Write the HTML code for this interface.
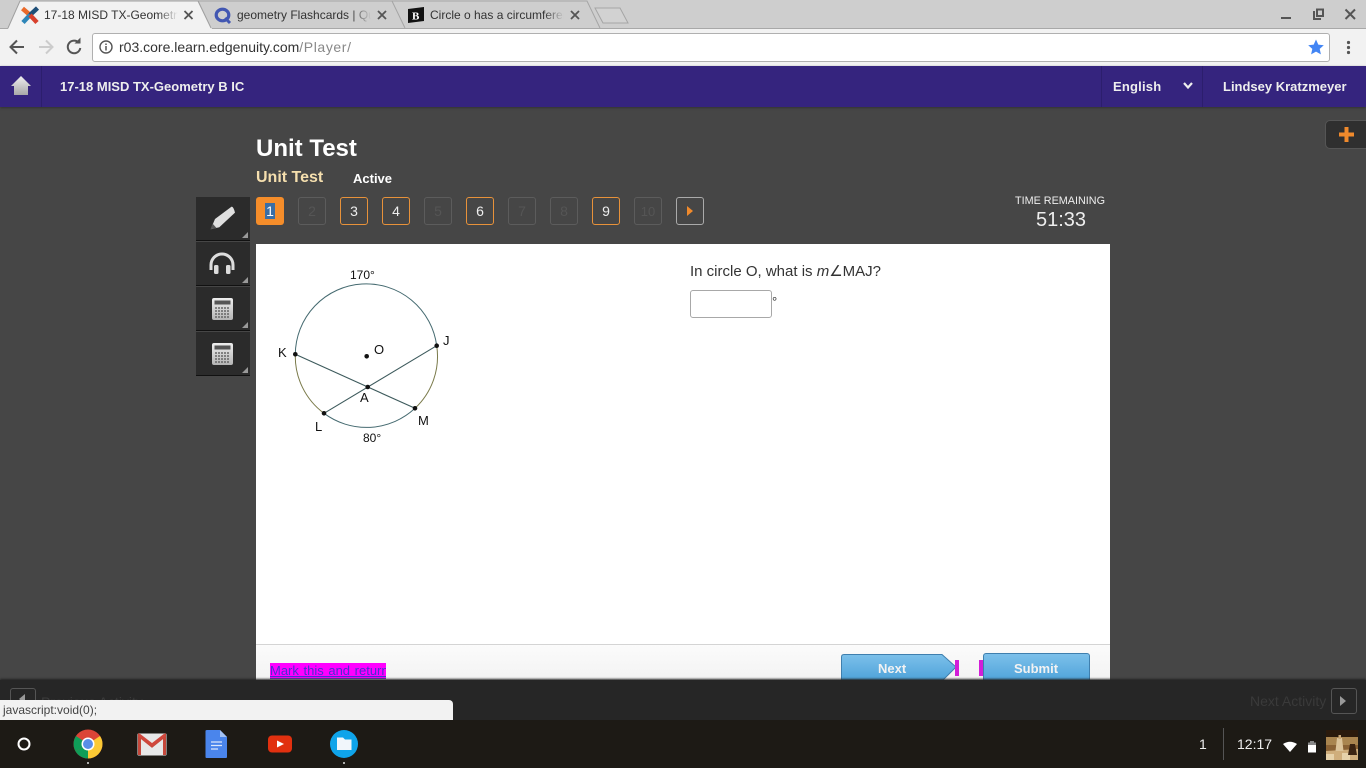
<!DOCTYPE html>
<html><head><meta charset="utf-8"><style>
html,body{margin:0;padding:0;width:1366px;height:768px;overflow:hidden;background:#464646;font-family:"Liberation Sans",sans-serif}
.a{position:absolute;white-space:nowrap}
.n{position:absolute;top:197px;width:26px;height:26px;border:1px solid #5c5c5c;border-radius:3px;text-align:center;line-height:27px;font-size:14px;color:#555}
.n.o{border-color:#e8923a;color:#eee}
.t{position:absolute;left:196px;width:54px;height:43px;background:#2b2b2b;border-bottom:1px solid #111}
.t:after{content:"";position:absolute;right:2px;bottom:2px;border-left:6px solid transparent;border-bottom:6px solid #999}
.tab{font-size:12px;color:#333;top:8px;overflow:hidden}
</style></head><body>
<div class="a" style="left:0;top:0;width:1366px;height:28px;background:#cecece"></div>
<div class="a" style="left:0;top:28px;width:1366px;height:1px;background:#a8a8a8"></div>
<div class="a" style="left:0;top:29px;width:1366px;height:37px;background:#f2f2f2"></div>
<svg class="a" style="left:0;top:0" width="640" height="30">
<path d="M404 28L391 1H587L600 28" fill="#cecece" stroke="#a5a5a5"/>
<path d="M211 28L198 1H392L405 28" fill="#cecece" stroke="#a5a5a5"/>
<path d="M8 29L20 1H198L212 29Z" fill="#f2f2f2"/><path d="M8 28L20 1H198L211 28" fill="none" stroke="#a0a0a0"/>
<path d="M595 8H620L628 23H603Z" fill="#d2d2d2" stroke="#a5a5a5"/>
<path d="M22.500 8.500L30 15" stroke="#ea6a2a" stroke-width="4.500"/><path d="M37.500 8L30 15" stroke="#1f4f78" stroke-width="4.500"/><path d="M30 15L23 22.500" stroke="#2e86b8" stroke-width="4.500"/><path d="M30 15L37 22.500" stroke="#d8402c" stroke-width="4.500"/>
<ellipse cx="222.500" cy="15" rx="6.300" ry="5.800" fill="none" stroke="#4257b2" stroke-width="3.200"/><path d="M225 18L230 23" stroke="#4257b2" stroke-width="3"/>
<path d="M408 9L424 7V21L408 23Z" fill="#111"/><text x="412" y="19.500" font-size="11" font-weight="bold" font-family="Liberation Serif" fill="#fff">B</text>
<g stroke="#555" stroke-width="1.800"><path d="M184.500 11L192.500 19M192.500 11L184.500 19M378 11L386 19M386 11L378 19M571 11L579 19M579 11L571 19"/></g>
</svg>
<div class="a tab" style="left:44px;width:134px;-webkit-mask-image:linear-gradient(90deg,#000 85%,transparent)">17-18 MISD TX-Geometry B IC</div>
<div class="a tab" style="left:237px;width:134px;-webkit-mask-image:linear-gradient(90deg,#000 85%,transparent)">geometry Flashcards | Quizlet</div>
<div class="a tab" style="left:430px;width:134px;-webkit-mask-image:linear-gradient(90deg,#000 85%,transparent)">Circle o has a circumference of</div>
<svg class="a" style="left:1270px;top:5px" width="96" height="20"><path d="M11 13H21" stroke="#555" stroke-width="2"/><path d="M44 6V14H51M47 4.500H53V11H47Z" fill="none" stroke="#555" stroke-width="2"/><path d="M75.500 4.500L85 14M85 4.500L75.500 14" stroke="#555" stroke-width="2"/></svg>
<svg class="a" style="left:0;top:30px" width="100" height="34"><path d="M24 17H11M17 10.500L10.500 17L17 23.500" fill="none" stroke="#555" stroke-width="2"/><path d="M52 17H39M46 10.500L52.500 17L46 23.500" fill="none" stroke="#ccc" stroke-width="2"/><path d="M79 13A6.300 6.300 0 1 0 80.300 18" fill="none" stroke="#555" stroke-width="2"/><path d="M74.500 13.500H80.500V7.500Z" fill="#555"/></svg>
<div class="a" style="left:92px;top:33px;width:1236px;height:27px;background:#fff;border:1px solid #b0b0b0;border-radius:3px"></div>
<svg class="a" style="left:98px;top:39px" width="16" height="16"><circle cx="8" cy="8" r="6" fill="none" stroke="#555" stroke-width="1.400"/><path d="M8 7V11.500M8 4.500V6" stroke="#555" stroke-width="1.500"/></svg>
<div class="a" style="left:119px;top:39px;font-size:14px;color:#333">r03.core.learn.edgenuity.com<span style="color:#888;letter-spacing:.6px">/Player/</span></div>
<svg class="a" style="left:1307px;top:38px" width="18" height="18"><path d="M9 1.500L11.300 6.600L16.800 7.200L12.700 10.900L13.900 16.400L9 13.600L4.100 16.400L5.300 10.900L1.200 7.200L6.700 6.600Z" fill="#4285f4"/></svg>
<svg class="a" style="left:1345px;top:40px" width="8" height="16"><circle cx="3.500" cy="2.500" r="1.600" fill="#555"/><circle cx="3.500" cy="7.500" r="1.600" fill="#555"/><circle cx="3.500" cy="12.500" r="1.600" fill="#555"/></svg>

<div class="a" style="left:0;top:66px;width:1366px;height:41px;background:#35247e;box-shadow:0 1px 2px #333"></div>
<div class="a" style="left:41px;top:66px;width:1px;height:41px;background:#2c1e6d"></div>
<div class="a" style="left:1101px;top:66px;width:1px;height:41px;background:#2c1e6d"></div>
<div class="a" style="left:1202px;top:66px;width:1px;height:41px;background:#2c1e6d"></div>
<svg class="a" style="left:10px;top:76px" width="22" height="20"><defs><linearGradient id="h" x1="0" y1="0" x2="0" y2="1"><stop offset="0" stop-color="#f0f0f0"/><stop offset="1" stop-color="#a8a8a8"/></linearGradient></defs><path d="M11 0L21 10H18V19H4V10H1Z" fill="url(#h)"/></svg>
<div class="a" style="left:60px;top:79px;font-size:13px;line-height:15px;font-weight:bold;color:#eee">17-18 MISD TX-Geometry B IC</div>
<div class="a" style="left:1113px;top:79px;font-size:13px;line-height:15px;font-weight:bold;color:#eee;letter-spacing:.2px">English</div>
<svg class="a" style="left:1182px;top:81px" width="12" height="10"><path d="M2 2L6 6.500L10 2" fill="none" stroke="#eee" stroke-width="2.200"/></svg>
<div class="a" style="left:1223px;top:79px;font-size:13px;line-height:15px;font-weight:bold;color:#eee">Lindsey Kratzmeyer</div>

<div class="a" style="left:1325px;top:120px;width:45px;height:27px;background:#2f2f2f;border:1px solid #555;border-radius:5px"></div>
<svg class="a" style="left:1339px;top:127px" width="15" height="15"><path d="M7.500 0V15M0 7.500H15" stroke="#f08a2c" stroke-width="4"/></svg>

<div class="a" style="left:256px;top:135px;font-size:24px;font-weight:bold;color:#fff">Unit Test</div>
<div class="a" style="left:256px;top:169px;font-size:16px;font-weight:bold;color:#f5dfae">Unit Test</div>
<div class="a" style="left:353px;top:171px;font-size:13px;font-weight:bold;color:#fff">Active</div>

<div class="n" style="left:256px;width:28px;height:28px;border:0;background:#f58d2a;color:#fff;line-height:28px"><span style="background:#3a6ea5;color:#fff;padding:0 1px">1</span></div>
<div class="n" style="left:298px">2</div>
<div class="n o" style="left:340px">3</div>
<div class="n o" style="left:382px">4</div>
<div class="n" style="left:424px">5</div>
<div class="n o" style="left:466px">6</div>
<div class="n" style="left:508px">7</div>
<div class="n" style="left:550px">8</div>
<div class="n o" style="left:592px">9</div>
<div class="n" style="left:634px;font-size:13px">10</div>
<div class="n" style="left:676px;border-color:#aaa"></div>
<svg class="a" style="left:686px;top:205px" width="8" height="12"><path d="M1 1L7 6L1 11Z" fill="#f08a2c"/></svg>

<div class="t" style="top:197px"></div>
<div class="t" style="top:242px"></div>
<div class="t" style="top:287px"></div>
<div class="t" style="top:332px"></div>
<svg class="a" style="left:196px;top:197px" width="54" height="180">
<defs><linearGradient id="k" x1="0" y1="0" x2="0" y2="1"><stop offset="0" stop-color="#eee"/><stop offset="1" stop-color="#b4b4b4"/></linearGradient></defs>
<path d="M19 22L35.600 9.600Q37.500 9.500 39 15.600L23.300 30.300L14.700 32.300Z" fill="#e0e0e0"/><path d="M14.700 32.300L16.500 26.500L20.500 31Z" fill="#555"/>
<path d="M15 73V68A11 11 0 0 1 37 68V73" fill="none" stroke="#ddd" stroke-width="3"/><rect x="18" y="68" width="4.500" height="9" rx="1.500" fill="#ddd"/><rect x="30" y="68" width="4.500" height="9" rx="1.500" fill="#ddd"/>
<rect x="16" y="101" width="21" height="22" rx="2" fill="url(#k)"/><rect x="18.500" y="103.500" width="16" height="4" fill="#555"/><path d="M19 111H34M19 114H34M19 117H34M19 120H34" stroke="#666" stroke-width="1.500" stroke-dasharray="2 1"/>
<g transform="translate(0 45)"><rect x="16" y="101" width="21" height="22" rx="2" fill="url(#k)"/><rect x="18.500" y="103.500" width="16" height="4" fill="#555"/><path d="M19 111H34M19 114H34M19 117H34M19 120H34" stroke="#666" stroke-width="1.500" stroke-dasharray="2 1"/></g>
</svg>

<div class="a" style="left:1015px;top:195px;font-size:10.800px;line-height:13px;color:#eee">TIME REMAINING</div>
<div class="a" style="left:1036px;top:209px;font-size:20px;color:#eee">51:33</div>

<div class="a" style="left:256px;top:244px;width:854px;height:436px;background:#fff"></div>
<div class="a" style="left:256px;top:644px;width:854px;height:36px;background:linear-gradient(#fbfbfb,#f3f3f3);border-top:1px solid #d4d4d4;box-sizing:border-box"></div>

<svg class="a" style="left:270px;top:260px" width="200" height="190">
<path d="M25.300 94.300A71 71 0 0 1 166.700 85.700" fill="none" stroke="#456a70" stroke-width="1"/>
<path d="M166.700 85.700A71 71 0 0 1 145 148.300M54 153.300A71 71 0 0 1 25.300 94.300" fill="none" stroke="#7a7a4a" stroke-width="1"/>
<path d="M54 153.300A71 71 0 0 0 145 148.300" fill="none" stroke="#456a70" stroke-width="1"/>
<path d="M25.300 94.300L145 148.300M54 153.300L166.700 85.700" stroke="#3d5a5c" stroke-width="1.100"/>
<g fill="#111"><circle cx="25.300" cy="94.300" r="2.300"/><circle cx="166.700" cy="85.700" r="2.300"/><circle cx="96.700" cy="96.300" r="2.300"/><circle cx="97.700" cy="127" r="2.300"/><circle cx="54" cy="153.300" r="2.300"/><circle cx="145" cy="148.300" r="2.300"/></g>
<g font-size="12" fill="#111" font-family="Liberation Sans">
<text x="80" y="19">170°</text><text x="93" y="182">80°</text></g>
<g font-size="13" fill="#111" font-family="Liberation Sans">
<text x="8" y="97">K</text><text x="173" y="85">J</text><text x="104" y="94">O</text><text x="90" y="142">A</text><text x="45" y="171">L</text><text x="148" y="165">M</text></g>
</svg>

<div class="a" style="left:690px;top:262px;font-size:15px;color:#333">In circle O, what is <i>m</i>∠MAJ?</div>
<div class="a" style="left:690px;top:290px;width:80px;height:26px;background:#fff;border:1px solid #a8a8a8;border-radius:3px"></div>
<div class="a" style="left:772px;top:294px;font-size:13px;color:#333">°</div>

<div class="a" style="left:270px;top:663px;width:116px;height:15px;background:#f0f;border-bottom:1px solid #7a2ad0;color:#4a2fd0;font-size:13px;line-height:16px;text-decoration:underline;word-spacing:1px;overflow:hidden">Mark this and return</div>
<svg class="a" style="left:841px;top:654px" width="115" height="26"><path d="M.500 26V3Q.500 .500 3 .500H101L115 13L102 26Z" fill="url(#g)" stroke="#3f7fae"/><defs><linearGradient id="g" x1="0" y1="0" x2="0" y2="1"><stop offset="0" stop-color="#7cc0ea"/><stop offset="1" stop-color="#4fa3da"/></linearGradient></defs></svg>
<div class="a" style="left:878px;top:661px;font-size:13px;font-weight:bold;color:#f2f2f2">Next</div>
<div class="a" style="left:955px;top:660px;width:4px;height:16px;background:#d21fd8"></div>
<div class="a" style="left:979px;top:660px;width:4px;height:16px;background:#d21fd8"></div>
<div class="a" style="left:983px;top:653px;width:105px;height:27px;background:linear-gradient(#7cc0ea,#4fa3da);border:1px solid #3f7fae;border-bottom:0;border-radius:3px 3px 0 0"></div>
<div class="a" style="left:1014px;top:661px;font-size:13px;font-weight:bold;color:#f2f2f2">Submit</div>

<div class="a" style="left:0;top:680px;width:1366px;height:40px;background:#262626;box-shadow:0 -1px 2px #222"></div>
<div class="a" style="left:10px;top:688px;width:24px;height:24px;border:1px solid #555;border-radius:3px"></div>
<svg class="a" style="left:18px;top:694px" width="8" height="8"><path d="M7 0L1 5L7 10Z" fill="#999"/></svg>
<div class="a" style="left:41px;top:694px;font-size:14px;color:#3c3c3c">Previous Activity</div>
<div class="a" style="left:1250px;top:693px;font-size:14px;color:#3a3a3a">Next Activity</div>
<div class="a" style="left:1331px;top:688px;width:24px;height:24px;border:1px solid #555;border-radius:3px"></div>
<svg class="a" style="left:1339px;top:695px" width="8" height="12"><path d="M1 1L7 6L1 11Z" fill="#999"/></svg>
<div class="a" style="left:0;top:700px;width:453px;height:20px;background:#f2f2f2;border-radius:0 4px 0 0"></div>
<div class="a" style="left:3px;top:703px;font-size:12px;color:#444">javascript:void(0);</div>

<div class="a" style="left:0;top:720px;width:1366px;height:48px;background:#1d1a15"></div>
<svg class="a" style="left:0;top:720px" width="370" height="48">
<circle cx="24" cy="24" r="5.500" fill="none" stroke="#fff" stroke-width="2"/>
<circle cx="88" cy="24" r="14.500" fill="#db4437"/>
<path d="M88 24L75.500 31.200A14.500 14.500 0 0 0 88 38.500Z" fill="#0f9d58"/><path d="M75.500 31.200A14.500 14.500 0 0 1 76 16L88 24Z" fill="#0f9d58"/>
<path d="M88 24V38.500A14.500 14.500 0 0 0 102.500 24A14 14 0 0 0 100 16Z" fill="#fcc934"/>
<circle cx="88" cy="24" r="6.500" fill="#fff"/><circle cx="88" cy="24" r="5" fill="#5a8ee8"/>
<rect x="137.500" y="13.500" width="29" height="22" rx="1" fill="#e8e8e8"/><path d="M139.500 35V16L152 26L164.500 16V35" fill="none" stroke="#c5483b" stroke-width="3"/><path d="M139 15L152 25L165 15" fill="none" stroke="#d0473c" stroke-width="3"/>
<path d="M207 10H220L227 17V37Q227 38 226 38H207Q205.500 38 205.500 37V11Q205.500 10 207 10Z" fill="#4a85ec"/><path d="M220 10L227 17H220Z" fill="#a3c2f5"/><path d="M211 22H222M211 25.500H222M211 29H218" stroke="#dce8fb" stroke-width="1.300"/>
<rect x="268" y="15.500" width="24" height="17" rx="4" fill="#e1300f"/><path d="M277 20.500L284 24L277 27.500Z" fill="#fff"/>
<circle cx="344" cy="24" r="14" fill="#0fa4ea"/><path d="M337 17.500H343L345 19.500H351.500V30H337Z" fill="#f1f6fb"/>
<circle cx="88" cy="43" r="1" fill="#ddd"/><circle cx="344" cy="43" r="1" fill="#ddd"/>
</svg>
<div class="a" style="left:1199px;top:736px;font-size:14px;color:#eee">1</div>
<div class="a" style="left:1223px;top:728px;width:1px;height:32px;background:#555"></div>
<div class="a" style="left:1237px;top:736px;font-size:14px;color:#eee">12:17</div>
<svg class="a" style="left:1283px;top:741px" width="34" height="12"><path d="M0 3Q7 -1.500 14 3L7 11Z" fill="#fff"/><rect x="25" y="4" width="8" height="7.500" fill="#fff"/><rect x="25" y="1.500" width="8" height="2.500" fill="#888"/><rect x="27" y="0" width="4" height="1.500" fill="#888"/></svg>
<svg class="a" style="left:1326px;top:730px" width="32" height="30"><rect width="32" height="30" fill="#8a6234"/><rect width="32" height="7" fill="#2a1a0c"/><path d="M0 7H32V15H0Z" fill="#a9854f"/><path d="M0 21L32 19V30H0Z" fill="#cfae7c"/><path d="M0 24H8V30H0ZM16 23H24V30H16Z" fill="#e6d2aa"/><path d="M11 8H16L17.500 21H9.500Z" fill="#dcc49a"/><path d="M12.500 5H15V9H12.500Z" fill="#c8a878"/><path d="M24 14H29L31 25H22Z" fill="#3a2412"/></svg>
</body></html>
